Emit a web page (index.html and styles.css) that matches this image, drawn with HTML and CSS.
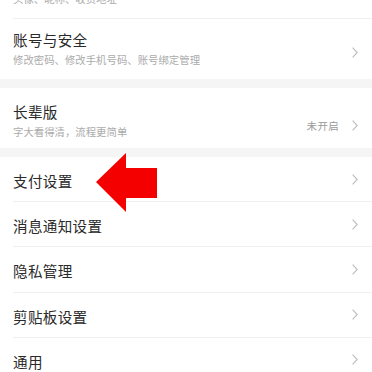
FILE: index.html
```html
<!DOCTYPE html>
<html lang="zh-CN">
<head>
<meta charset="utf-8">
<link rel="stylesheet" href="styles.css">
</head>
<body>
<div class="page">
  <div class="group group-first">
    <div class="row tall">
      <div class="text">
        <div class="title">个人信息</div>
        <div class="sub">头像、昵称、收货地址</div>
      </div>
      <svg class="chev" viewBox="0 0 6 11"><polyline points="0.6,0.6 5.2,5.5 0.6,10.4"/></svg>
    </div>
    <div class="divider"></div>
    <div class="row tall">
      <div class="text">
        <div class="title">账号与安全</div>
        <div class="sub">修改密码、修改手机号码、账号绑定管理</div>
      </div>
      <svg class="chev chev-up" viewBox="0 0 6 11"><polyline points="0.6,0.6 5.2,5.5 0.6,10.4"/></svg>
    </div>
  </div>
  <div class="band"></div>
  <div class="group">
    <div class="row tall tall2">
      <div class="text">
        <div class="title">长辈版</div>
        <div class="sub">字大看得清，流程更简单</div>
      </div>
      <span class="value">未开启</span>
      <svg class="chev" viewBox="0 0 6 11"><polyline points="0.6,0.6 5.2,5.5 0.6,10.4"/></svg>
    </div>
  </div>
  <div class="band band2"></div>
  <div class="group">
    <div class="row"><div class="title">支付设置</div><svg class="chev" viewBox="0 0 6 11"><polyline points="0.6,0.6 5.2,5.5 0.6,10.4"/></svg></div>
    <div class="divider"></div>
    <div class="row"><div class="title">消息通知设置</div><svg class="chev" viewBox="0 0 6 11"><polyline points="0.6,0.6 5.2,5.5 0.6,10.4"/></svg></div>
    <div class="divider"></div>
    <div class="row"><div class="title">隐私管理</div><svg class="chev" viewBox="0 0 6 11"><polyline points="0.6,0.6 5.2,5.5 0.6,10.4"/></svg></div>
    <div class="divider"></div>
    <div class="row"><div class="title">剪贴板设置</div><svg class="chev" viewBox="0 0 6 11"><polyline points="0.6,0.6 5.2,5.5 0.6,10.4"/></svg></div>
    <div class="divider"></div>
    <div class="row"><div class="title">通用</div><svg class="chev" viewBox="0 0 6 11"><polyline points="0.6,0.6 5.2,5.5 0.6,10.4"/></svg></div>
  </div>
  <svg class="arrow" viewBox="0 0 64 62" width="64" height="62"><polygon points="0,29 30,0 30,15 61,15 61,45 30,45 30,59"/></svg>
</div>
</body>
</html>
```

FILE: styles.css
```css
html, body {
  margin: 0;
  padding: 0;
  background: #fff;
  overflow: hidden;
}
body {
  width: 372px;
  height: 372px;
  font-family: "Noto Sans CJK SC", "Noto Sans", sans-serif;
}
.page {
  position: relative;
  display: flow-root;
  width: 372px;
}
.group {
  background: #fff;
}
.group-first {
  margin-top: -42px;
}
.row {
  display: flex;
  align-items: center;
  height: 44.2px;
  padding: 0 14px 0 13px;
  box-sizing: border-box;
}
.row.tall {
  height: 60px;
  align-items: flex-start;
  padding-top: 11px;
}
.row.tall2 {
  padding-top: 14px;
}
.text {
  flex: 1;
  display: flex;
  flex-direction: column;
}
.row > .title {
  flex: 1;
  position: relative;
  top: 2px;
}
.title {
  font-size: 14.6px;
  line-height: 20px;
  color: #2a2a2a;
  letter-spacing: 0.3px;
}
.sub {
  font-size: 10.4px;
  line-height: 20px;
  color: #ababab;
}
.value {
  font-size: 10.5px;
  color: #9a9a9a;
  margin-right: 13px;
  align-self: center;
  letter-spacing: 0.3px;
}
.chev {
  width: 6px;
  height: 11px;
  fill: none;
  stroke: #bdbdbd;
  stroke-width: 1.1;
  flex: none;
}
.row.tall .chev {
  align-self: center;
}
.row.tall .chev-up {
  position: relative;
  top: -2px;
}
.divider {
  height: 1px;
  background: #f0f0f0;
  margin-left: 13px;
}
.band {
  height: 9px;
  background: #f5f5f5;
}
.band2 {
  height: 9px;
}
.arrow {
  position: absolute;
  left: 96px;
  top: 153px;
  fill: #f50000;
}
```
